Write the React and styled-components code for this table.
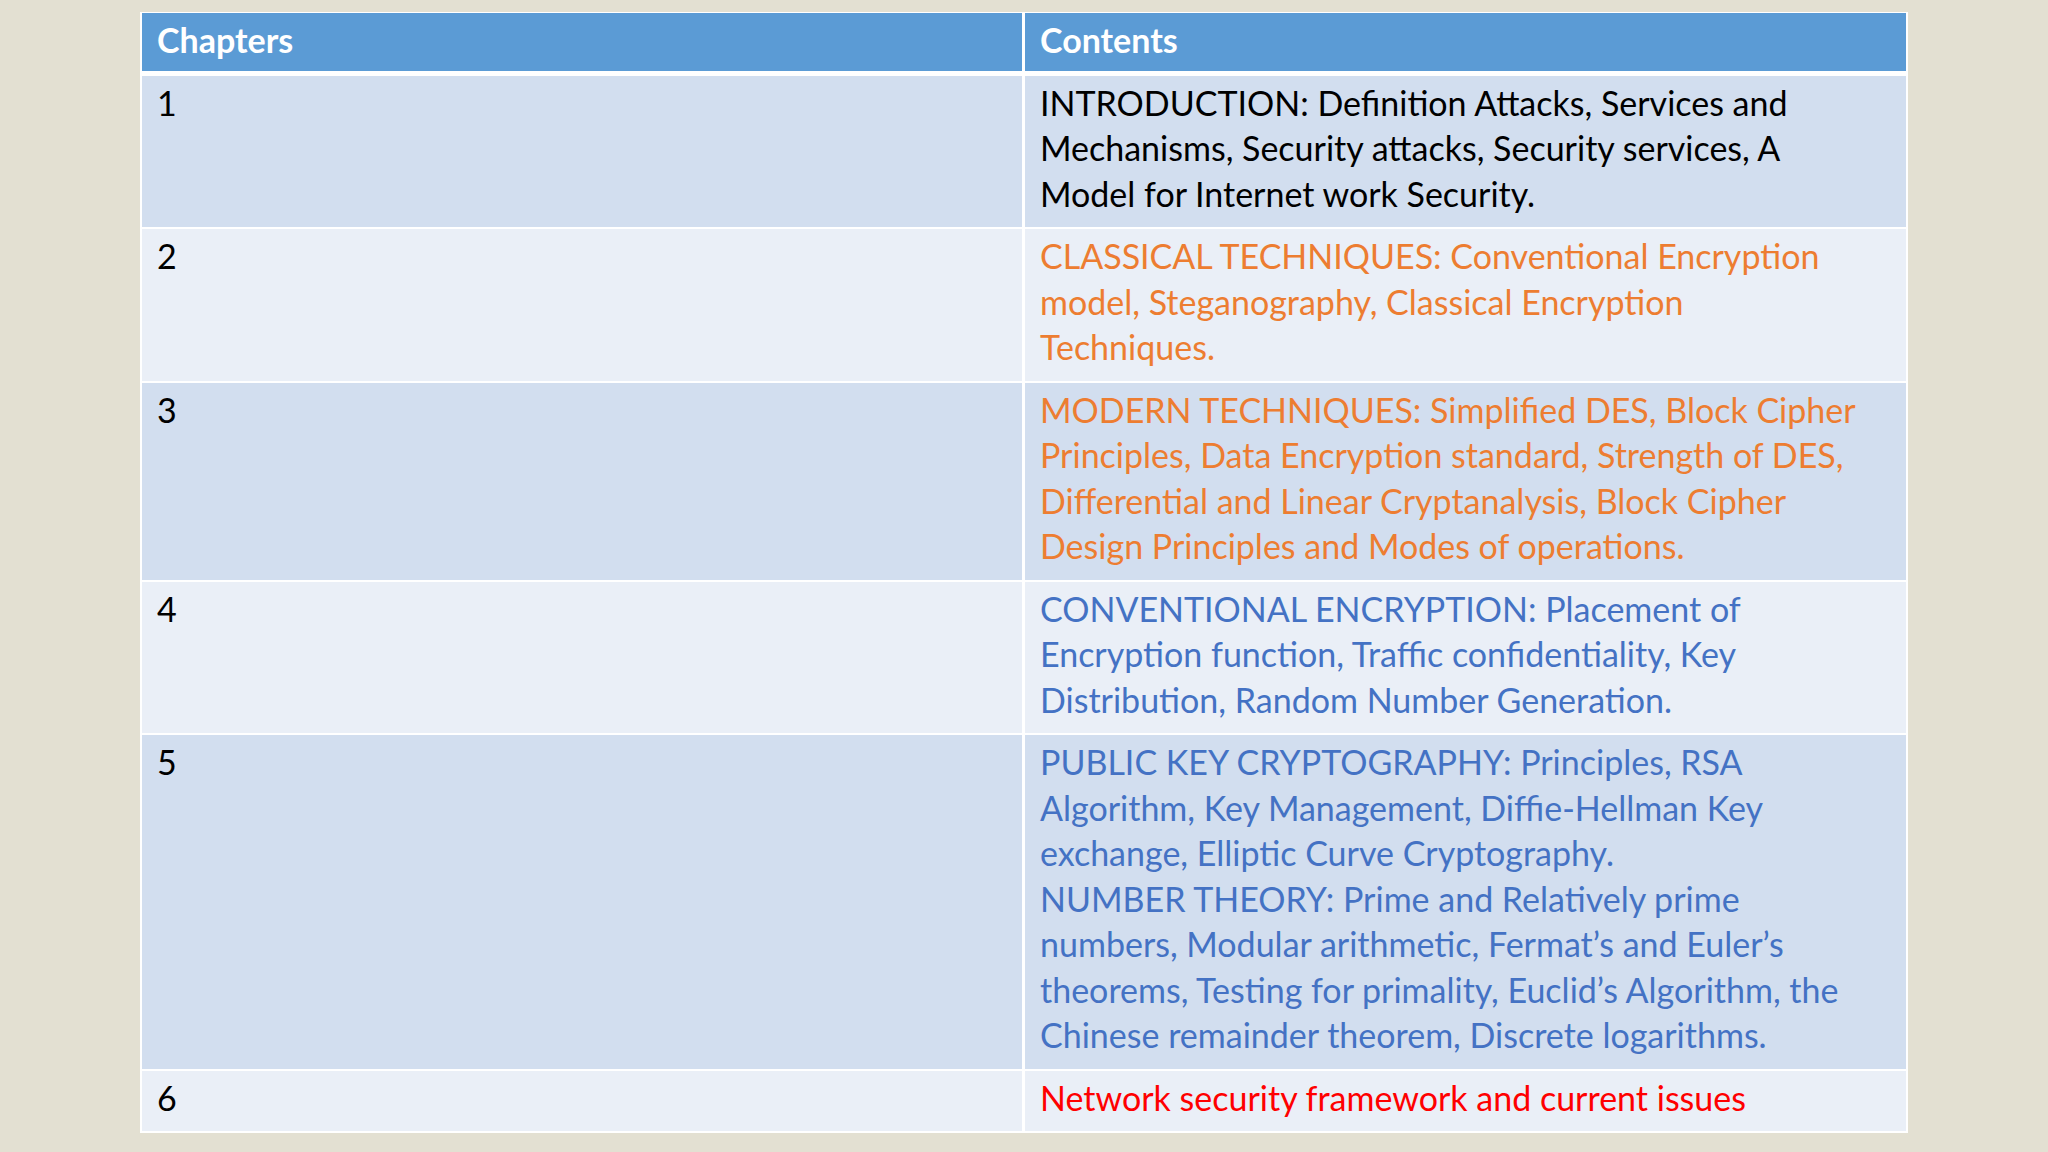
import styled, { createGlobalStyle } from 'styled-components';

const GlobalStyle = createGlobalStyle`
  html, body {
    margin: 0;
    padding: 0;
    background: #e3e0d2;
  }
  body {
    font-family: Lato, "Open Sans", sans-serif;
  }
`;

const colors = {
  black: '#000000',
  orange: '#ed7d31',
  blue: '#4472c4',
  red: '#ff0000',
};

const Page = styled.div`
  width: 2048px;
  height: 1152px;
  box-sizing: border-box;
  padding: 12px 140px 0 140px;
  background: #e3e0d2;
  overflow: hidden;
`;

const Table = styled.div`
  display: flex;
  flex-direction: column;
  gap: 2px;
  padding: 1px 2px 2px 2px;
  background: #ffffff;
  width: 1768px;
  box-sizing: border-box;
`;

const Row = styled.div`
  display: grid;
  grid-template-columns: 880px 1fr;
  column-gap: 3px;
  margin-bottom: ${({ $header }) => ($header ? '3px' : '0')};
`;

const Cell = styled.div`
  box-sizing: border-box;
  padding: ${({ $header }) => ($header ? '4px 15px 8px 15px' : '4px 15px 11px 15px')};
  background: ${({ $band, $header }) =>
    $header ? '#5b9bd5' : $band ? '#d2deef' : '#eaeff7'};
  color: ${({ $color }) => $color || '#000'};
  font-size: 34px;
  line-height: 45.5px;
  font-weight: ${({ $header }) => ($header ? 700 : 400)};
  ${({ $header }) => $header && 'color: #ffffff;'}
`;

const Line = styled.span`
  display: block;
  white-space: nowrap;
`;

const rows = [
  {
    num: '1',
    color: colors.black,
    lines: [
      'INTRODUCTION: Definition Attacks, Services and',
      'Mechanisms, Security attacks, Security services, A',
      'Model for Internet work Security.',
    ],
  },
  {
    num: '2',
    color: colors.orange,
    lines: [
      'CLASSICAL TECHNIQUES: Conventional Encryption',
      'model, Steganography, Classical Encryption',
      'Techniques.',
    ],
  },
  {
    num: '3',
    color: colors.orange,
    lines: [
      'MODERN TECHNIQUES: Simplified DES, Block Cipher',
      'Principles, Data Encryption standard, Strength of DES,',
      'Differential and Linear Cryptanalysis, Block Cipher',
      'Design Principles and Modes of operations.',
    ],
  },
  {
    num: '4',
    color: colors.blue,
    lines: [
      'CONVENTIONAL ENCRYPTION: Placement of',
      'Encryption function, Traffic confidentiality, Key',
      'Distribution, Random Number Generation.',
    ],
  },
  {
    num: '5',
    color: colors.blue,
    lines: [
      'PUBLIC KEY CRYPTOGRAPHY: Principles, RSA',
      'Algorithm, Key Management, Diffie-Hellman Key',
      'exchange, Elliptic Curve Cryptography.',
      'NUMBER THEORY: Prime and Relatively prime',
      'numbers, Modular arithmetic, Fermat\u2019s and Euler\u2019s',
      'theorems, Testing for primality, Euclid\u2019s Algorithm, the',
      'Chinese remainder theorem, Discrete logarithms.',
    ],
  },
  {
    num: '6',
    color: colors.red,
    lines: ['Network security framework and current issues'],
  },
];

function App() {
  return (
    <Page>
      <GlobalStyle />
      <Table>
        <Row $header>
          <Cell $header>
            <Line>Chapters</Line>
          </Cell>
          <Cell $header>
            <Line>Contents</Line>
          </Cell>
        </Row>
        {rows.map((row, i) => (
          <Row key={`row-${row.num}`}>
            <Cell $band={i % 2 === 0}>
              <Line>{row.num}</Line>
            </Cell>
            <Cell $band={i % 2 === 0} $color={row.color}>
              {row.lines.map((line) => (
                <Line key={line}>{line}</Line>
              ))}
            </Cell>
          </Row>
        ))}
      </Table>
    </Page>
  );
}

export default App;
